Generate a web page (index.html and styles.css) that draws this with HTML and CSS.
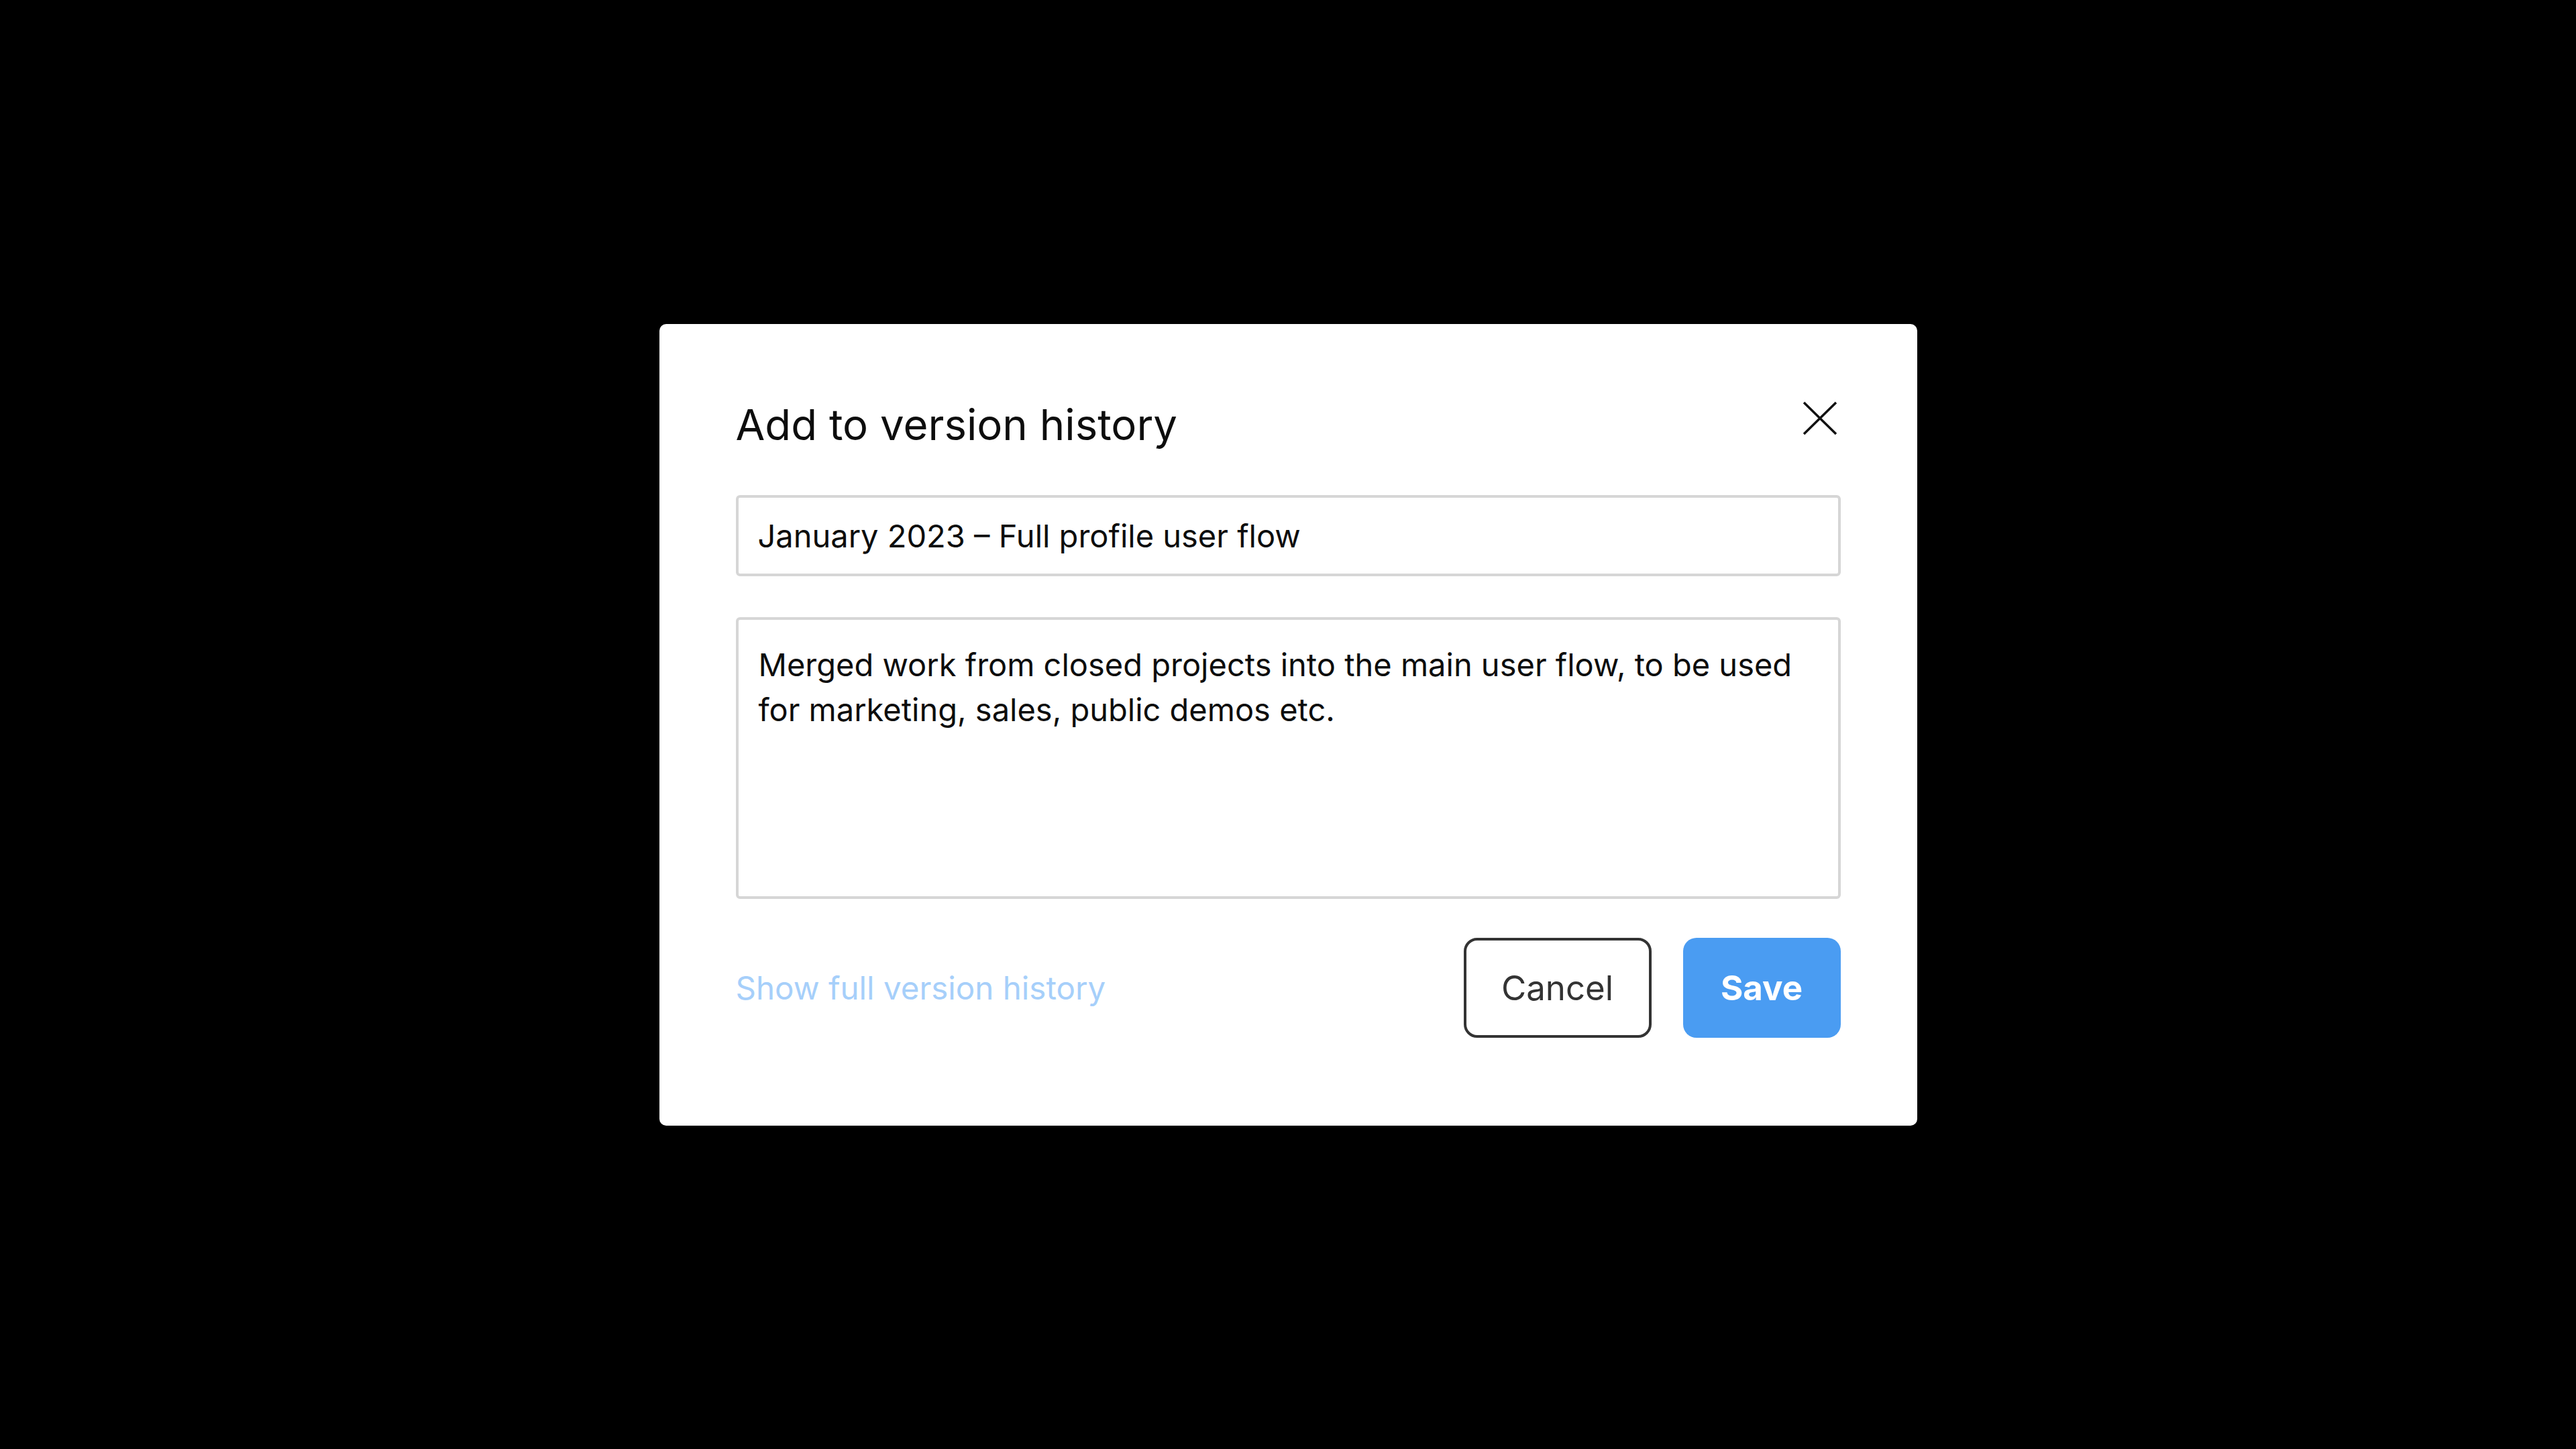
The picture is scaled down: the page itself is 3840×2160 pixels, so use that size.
FILE: index.html
```html
<!DOCTYPE html>
<html lang="en">
<head>
<meta charset="utf-8">
<title>Add to version history</title>
<link rel="stylesheet" href="styles.css">
</head>
<body>
<div class="overlay">
  <div class="modal" role="dialog" aria-labelledby="dlg-title">
    <div class="modal-header">
      <h1 id="dlg-title" class="modal-title">Add to version history</h1>
      <button class="close-btn" aria-label="Close">
        <svg class="close-icon" width="50" height="49" viewBox="0 0 50 49" aria-hidden="true">
          <line x1="1" y1="1" x2="49" y2="48" />
          <line x1="49" y1="1" x2="1" y2="48" />
        </svg>
      </button>
    </div>
    <input class="field field-title" type="text" value="January 2023 – Full profile user flow">
    <textarea class="field field-desc">Merged work from closed projects into the main user flow, to be used for marketing, sales, public demos etc.</textarea>
    <div class="modal-footer">
      <a class="history-link" href="#">Show full version history</a>
      <div class="actions">
        <button class="btn btn-cancel">Cancel</button>
        <button class="btn btn-save">Save</button>
      </div>
    </div>
  </div>
</div>
</body>
</html>
```

FILE: styles.css
```css
html, body {
  margin: 0;
  padding: 0;
  background: #000;
}

body {
  font-family: Inter, "Noto Sans", "Liberation Sans", sans-serif;
  color: #111;
}

.overlay {
  width: 100vw;
  height: 100vh;
  display: flex;
  align-items: center;
  justify-content: center;
}

.modal {
  width: 1875px;
  box-sizing: border-box;
  padding: 113px 114px 131px;
  background: #fff;
  border-radius: 10px;
  display: flex;
  flex-direction: column;
}

.modal-header {
  display: flex;
  justify-content: space-between;
  align-items: flex-start;
}

.modal-title {
  margin: 0;
  font-size: 63.5px;
  line-height: 73px;
  font-weight: 400;
  color: #0d0d0d;
}

.close-btn {
  margin: 3px 6px 0 0;
  padding: 0;
  border: 0;
  background: none;
  width: 50px;
  height: 49px;
  cursor: pointer;
}

.close-icon {
  display: block;
  overflow: visible;
}

.close-icon line {
  stroke: #111;
  stroke-width: 3.5;
  stroke-linecap: butt;
}

.field {
  display: block;
  width: 100%;
  box-sizing: border-box;
  border: 4px solid #d6d6d6;
  border-radius: 6px;
  background: #fff;
  color: #0d0d0d;
  font-family: inherit;
  outline: none;
  margin: 0;
}

.field-title {
  margin-top: 69px;
  height: 121px;
  padding: 0 29px;
  font-size: 47px;
}

.field-desc {
  margin-top: 61px;
  height: 420px;
  padding: 33px 30px;
  font-size: 47px;
  line-height: 67px;
  resize: none;
  overflow: hidden;
}

.modal-footer {
  margin-top: 58px;
  display: flex;
  justify-content: space-between;
  align-items: center;
}

.history-link {
  font-size: 47.5px;
  color: #a6cffa;
  text-decoration: none;
}

.actions {
  display: flex;
  gap: 47px;
}

.btn {
  height: 149px;
  box-sizing: border-box;
  border-radius: 20px;
  font-family: inherit;
  font-size: 51px;
  cursor: pointer;
  display: flex;
  align-items: center;
  justify-content: center;
}

.btn-cancel {
  width: 280px;
  background: #fff;
  border: 4px solid #333;
  color: #333;
  font-weight: 400;
}

.btn-save {
  width: 235px;
  background: #4a9cf2;
  border: 0;
  color: #fff;
  font-weight: 700;
}
```
